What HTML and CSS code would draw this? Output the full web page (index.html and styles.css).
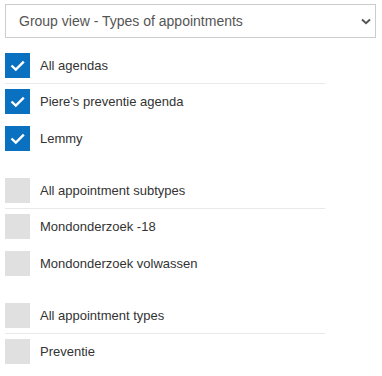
FILE: index.html
```html
<!DOCTYPE html>
<html lang="en">
  <head>
    <meta charset="UTF-8">
    <meta name="viewport" content="width=device-width, initial-scale=1.0">
    <title>Group view</title>
    <link rel="stylesheet" href="styles.css">
  </head>
  <body>
    <div class="panel">
      <div class="view-select">
        <span class="view-select-text">Group view - Types of appointments</span>
        <svg class="chevron" width="10" height="7" viewBox="0 0 10 7"><path d="M1 1.5 L5 5.2 L9 1.5" fill="none" stroke="#555" stroke-width="2"/></svg>
      </div>

      <!-- agendas -->
      <div class="group">
        <div class="row sep"><span class="box checked"><svg width="25" height="25" viewBox="0 0 25 25"><path d="M6.5 12.5 L10.8 16.6 L18.8 8.6" fill="none" stroke="#fff" stroke-width="2.4"/></svg></span><span class="label">All agendas</span></div>
        <div class="row"><span class="box checked"><svg width="25" height="25" viewBox="0 0 25 25"><path d="M6.5 12.5 L10.8 16.6 L18.8 8.6" fill="none" stroke="#fff" stroke-width="2.4"/></svg></span><span class="label">Piere's preventie agenda</span></div>
        <div class="row"><span class="box checked"><svg width="25" height="25" viewBox="0 0 25 25"><path d="M6.5 12.5 L10.8 16.6 L18.8 8.6" fill="none" stroke="#fff" stroke-width="2.4"/></svg></span><span class="label">Lemmy</span></div>
      </div>

      <!-- subtypes -->
      <div class="group">
        <div class="row sep"><span class="box"></span><span class="label">All appointment subtypes</span></div>
        <div class="row"><span class="box"></span><span class="label">Mondonderzoek -18</span></div>
        <div class="row"><span class="box"></span><span class="label">Mondonderzoek volwassen</span></div>
      </div>

      <!-- types -->
      <div class="group">
        <div class="row sep"><span class="box"></span><span class="label">All appointment types</span></div>
        <div class="row"><span class="box"></span><span class="label">Preventie</span></div>
      </div>
    </div>
  </body>
</html>
```

FILE: styles.css
```css
body {
    margin: 0;
    background-color: white;
    font-family: "Liberation Sans", Arial, Helvetica, sans-serif;
}

.panel {
    padding: 4px 6px 0 5px;
}

.view-select {
    display: flex;
    align-items: center;
    justify-content: space-between;
    height: 34px;
    box-sizing: border-box;
    border: 1px solid #cccccc;
    padding: 0 4px 0 13px;
    margin-bottom: 10px;
    font-size: 14px;
    color: #555555;
}

.chevron {
    display: block;
}

.group {
    width: 320px;
    margin-bottom: 15px;
}

.row {
    display: flex;
    align-items: center;
    padding: 5px 0 7px 0;
}

.row.sep {
    padding-bottom: 5px;
    border-bottom: 1px solid #e9e9e9;
}

.box {
    width: 25px;
    height: 25px;
    background-color: #e0e0e0;
    flex-shrink: 0;
}

.box svg {
    display: block;
}

.box.checked {
    background-color: #0a70c0;
}

.label {
    margin-left: 10px;
    font-size: 13px;
    color: #333333;
}
```
